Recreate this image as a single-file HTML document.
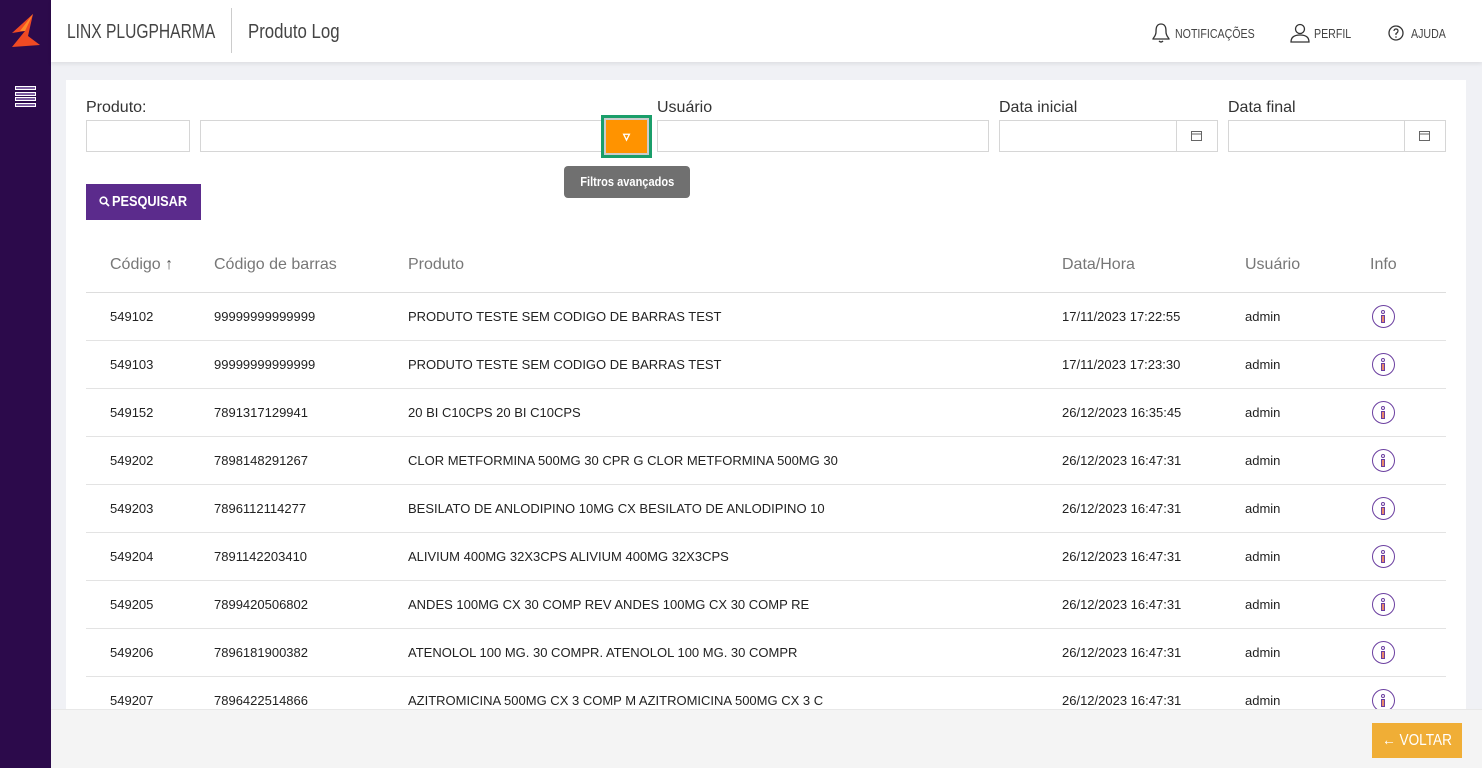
<!DOCTYPE html>
<html><head><meta charset="utf-8"><style>
*{box-sizing:border-box;margin:0;padding:0}
body{width:1482px;height:768px;overflow:hidden;font-family:"Liberation Sans",sans-serif;background:#f0f1f5;position:relative;color:#222}
.side{position:absolute;left:0;top:0;width:51px;height:768px;background:#2c0a4b}
.hdr{position:absolute;left:51px;top:0;right:0;height:62px;background:#fff;box-shadow:0 2px 4px rgba(0,0,0,.08)}
.panel{position:absolute;left:66px;top:80px;width:1400px;height:640px;background:#fff}
.lbl{position:absolute;font-size:16px;color:#333}
.inp{position:absolute;height:32px;border:1px solid #d6d6d6;background:#fff}
.cal{position:absolute;right:0;top:0;width:41px;height:30px;border-left:1px solid #d6d6d6}
table{position:absolute;left:20px;top:160px;width:1360px;border-collapse:collapse;font-size:13px}
th{font-weight:normal;color:#777;font-size:16px;text-align:left;height:52px;border-bottom:1px solid #ddd;padding-left:24px;padding-bottom:2px}
td{height:48px;border-bottom:1px solid #e3e3e3;padding-left:24px;color:#222}
.foot{position:absolute;left:51px;top:709px;right:0;height:59px;background:#f4f4f4;border-top:1px solid #e8e8e8}
.ic{display:inline-block;width:23px;height:23px;border:1.5px solid #6b3fa0;border-radius:50%;position:relative;left:2px;top:2px}
.ic:before{content:"";position:absolute;left:8px;top:4px;width:4px;height:4px;border:1px solid #6b3fa0;border-radius:50%;box-sizing:border-box}
.ic:after{content:"";position:absolute;left:8px;top:9px;width:4px;height:8px;border:1px solid #6b3fa0;background:#e98a6a;box-sizing:border-box}
.sq{display:inline-block;transform:scaleX(.78);transform-origin:left}
.nav{position:absolute;top:27px;font-size:12.5px;color:#444;transform:scaleX(.85);transform-origin:left}
</style></head><body>
<div class="side">
<svg width="51" height="62" viewBox="0 0 51 62"><path d="M33 14 L12 33 L25 31 L12 47 L40 45 L28 36 Z" fill="#f04a23"/><path d="M33 14 L20 31 L25 31 Z" fill="#ff8a2a"/></svg>
<div style="position:absolute;left:15px;top:86px;width:21px;height:20px">
<div style="height:4px;border:1px solid #fff;background:#7a5a9e;margin-bottom:1.5px"></div><div style="height:4px;border:1px solid #fff;background:#7a5a9e;margin-bottom:1.5px"></div><div style="height:4px;border:1px solid #fff;background:#7a5a9e;margin-bottom:1.5px"></div><div style="height:4px;border:1px solid #fff;background:#7a5a9e"></div></div>
</div>
<div class="hdr">
<div style="position:absolute;left:16px;top:21px;font-size:20px;color:#444;white-space:nowrap"><span class="sq">LINX PLUGPHARMA</span></div>
<div style="position:absolute;left:180px;top:8px;width:1px;height:45px;background:#ccc"></div>
<div style="position:absolute;left:197px;top:21px;font-size:20px;color:#444;white-space:nowrap"><span class="sq" style="transform:scaleX(.84)">Produto Log</span></div>
<svg style="position:absolute;left:1100px;top:22px" width="20" height="22" viewBox="0 0 20 22"><path d="M10 2 C5 2 5 7 5 10 C5 14 2 16 2 17 L18 17 C18 16 15 14 15 10 C15 7 15 2 10 2 Z M8 19 Q10 21 12 19" fill="none" stroke="#333" stroke-width="1.3"/></svg>
<div class="nav" style="left:1124px">NOTIFICAÇÕES</div>
<svg style="position:absolute;left:1238px;top:23px" width="22" height="20" viewBox="0 0 22 20"><circle cx="11" cy="6" r="4.5" fill="none" stroke="#333" stroke-width="1.3"/><path d="M2 19 Q2 12 11 12 Q20 12 20 19 Z" fill="none" stroke="#333" stroke-width="1.3"/></svg>
<div class="nav" style="left:1263px">PERFIL</div>
<svg style="position:absolute;left:1336px;top:24px" width="18" height="18" viewBox="0 0 18 18"><circle cx="9" cy="9" r="7" fill="none" stroke="#333" stroke-width="1.3"/><path d="M7 7 Q7 5 9 5 Q11 5 11 7 Q11 8.5 9 9.5 L9 11" fill="none" stroke="#333" stroke-width="1.2"/><circle cx="9" cy="13" r=".8" fill="#333"/></svg>
<div class="nav" style="left:1360px">AJUDA</div>
</div>
<div class="panel">
<div class="lbl" style="left:20px;top:19px">Produto:</div>
<div class="lbl" style="left:591px;top:19px">Usuário</div>
<div class="lbl" style="left:933px;top:19px">Data inicial</div>
<div class="lbl" style="left:1162px;top:19px">Data final</div>
<div class="inp" style="left:20px;top:40px;width:104px"></div>
<div class="inp" style="left:134px;top:40px;width:402px"></div>
<div style="position:absolute;left:535px;top:35px;width:51px;height:43px;border:3px solid #1a9e6a;padding:2px;background:#ccc"><div style="width:100%;height:100%;background:#ff9300;color:#fff;text-align:center;font-size:14px;font-weight:bold;line-height:32px">▿</div></div>
<div class="inp" style="left:591px;top:40px;width:332px"></div>
<div class="inp" style="left:933px;top:40px;width:219px"><div class="cal"><svg width="40" height="30"><rect x="14.5" y="10.5" width="10" height="9" fill="none" stroke="#666"/><line x1="14" y1="13" x2="25" y2="13" stroke="#666"/></svg></div></div>
<div class="inp" style="left:1162px;top:40px;width:218px"><div class="cal"><svg width="40" height="30"><rect x="14.5" y="10.5" width="10" height="9" fill="none" stroke="#666"/><line x1="14" y1="13" x2="25" y2="13" stroke="#666"/></svg></div></div>
<div style="position:absolute;left:498px;top:86px;width:126px;height:32px;background:#707070;border-radius:4px;color:#fff;font-size:13px;font-weight:bold;text-align:center;line-height:32px"><span style="display:inline-block;transform:scaleX(.85)">Filtros avançados</span></div>
<div style="position:absolute;left:20px;top:104px;width:115px;height:36px;background:#5b2b8c;color:#fff;font-weight:bold;font-size:15px;line-height:36px;padding-left:13px;white-space:nowrap"><svg width="11" height="11" viewBox="0 0 11 11" style="vertical-align:-1px"><circle cx="4.5" cy="4.5" r="3.3" fill="none" stroke="#fff" stroke-width="1.6"/><path d="M7 7 L10 10" stroke="#fff" stroke-width="1.8"/></svg><span style="display:inline-block;transform:scaleX(.85);transform-origin:left;margin-left:2px">PESQUISAR</span></div>
<table>
<tr><th style="width:104px">Código <b style="color:#555">↑</b></th><th style="width:194px">Código de barras</th><th style="width:654px">Produto</th><th style="width:183px">Data/Hora</th><th style="width:125px">Usuário</th><th>Info</th></tr>
<tr><td>549102</td><td>99999999999999</td><td>PRODUTO TESTE SEM CODIGO DE BARRAS TEST</td><td>17/11/2023 17:22:55</td><td>admin</td><td><span class="ic"></span></td></tr>
<tr><td>549103</td><td>99999999999999</td><td>PRODUTO TESTE SEM CODIGO DE BARRAS TEST</td><td>17/11/2023 17:23:30</td><td>admin</td><td><span class="ic"></span></td></tr>
<tr><td>549152</td><td>7891317129941</td><td>20 BI C10CPS 20 BI C10CPS</td><td>26/12/2023 16:35:45</td><td>admin</td><td><span class="ic"></span></td></tr>
<tr><td>549202</td><td>7898148291267</td><td>CLOR METFORMINA 500MG 30 CPR G CLOR METFORMINA 500MG 30</td><td>26/12/2023 16:47:31</td><td>admin</td><td><span class="ic"></span></td></tr>
<tr><td>549203</td><td>7896112114277</td><td>BESILATO DE ANLODIPINO 10MG CX BESILATO DE ANLODIPINO 10</td><td>26/12/2023 16:47:31</td><td>admin</td><td><span class="ic"></span></td></tr>
<tr><td>549204</td><td>7891142203410</td><td>ALIVIUM 400MG 32X3CPS ALIVIUM 400MG 32X3CPS</td><td>26/12/2023 16:47:31</td><td>admin</td><td><span class="ic"></span></td></tr>
<tr><td>549205</td><td>7899420506802</td><td>ANDES 100MG CX 30 COMP REV ANDES 100MG CX 30 COMP RE</td><td>26/12/2023 16:47:31</td><td>admin</td><td><span class="ic"></span></td></tr>
<tr><td>549206</td><td>7896181900382</td><td>ATENOLOL 100 MG. 30 COMPR. ATENOLOL 100 MG. 30 COMPR</td><td>26/12/2023 16:47:31</td><td>admin</td><td><span class="ic"></span></td></tr>
<tr><td>549207</td><td>7896422514866</td><td>AZITROMICINA 500MG CX 3 COMP M AZITROMICINA 500MG CX 3 C</td><td>26/12/2023 16:47:31</td><td>admin</td><td><span class="ic"></span></td></tr>
</table>
</div>
<div class="foot"><div style="position:absolute;left:1321px;top:13px;width:90px;height:35px;background:#f0ae36;color:#fff;font-size:16px;line-height:35px;text-align:center;white-space:nowrap"><span style="display:inline-block;transform:scaleX(.85)">← VOLTAR</span></div></div>
</body></html>
